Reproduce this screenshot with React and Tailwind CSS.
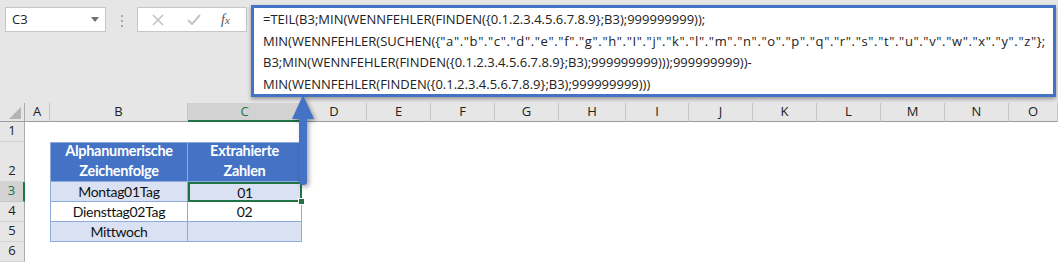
import React from 'react';

const cols = ['A', 'B', 'C', 'D', 'E', 'F', 'G', 'H', 'I', 'J', 'K', 'L', 'M', 'N', 'O'];

const letters = '"a"."b"."c"."d"."e"."f"."g"."h"."I"."j"."k"."l"."m"."n"."o"."p"."q"."r"."s"."t"."u"."v"."w"."x"."y"."z"';

const ui = { fontFamily: '"Open Sans", "Liberation Sans", sans-serif' };
const cell = { fontFamily: 'Lato, "Liberation Sans", sans-serif' };

function RowHead({ n, h, active }) {
  return (
    <div
      className={`flex items-end justify-center pb-[1px] text-[13px] border-b border-r ${h} ${
        active ? 'bg-[#d2d2d2] text-[#217346] border-r-2 border-r-[#217346] border-b-[#c6c6c6]' : 'bg-[#e6e6e6] text-[#222] border-b-[#d4d4d4] border-r-[#ababab]'
      }`}
      style={ui}
    >
      {n}
    </div>
  );
}

export default function App() {
  return (
    <div className="relative w-[1058px] h-[263px] overflow-hidden bg-white">
      {/* formula bar area */}
      <div className="h-[103px] bg-[#e6e6e6] flex items-start pt-[5px]">
        <div className="mt-[2px] ml-[5px] w-[101px] h-[25px] bg-white border border-[#c6c6c6] flex items-center justify-between pl-[6px] pr-[6px] text-[13px] text-[#222]" style={ui}>
          <span>C3</span>
          <svg width="8" height="5" viewBox="0 0 8 5"><path d="M0 0h8L4 5z" fill="#707070" /></svg>
        </div>
        <div className="mt-[10px] w-[31px] flex flex-col items-center gap-[3px]">
          <span className="w-[2px] h-[2px] bg-[#a8a8a8]" />
          <span className="w-[2px] h-[2px] bg-[#a8a8a8]" />
          <span className="w-[2px] h-[2px] bg-[#a8a8a8]" />
        </div>
        <div className="mt-[2px] w-[110px] h-[25px] bg-white border border-[#c6c6c6] flex items-center">
          <svg className="ml-[14px]" width="12" height="12" viewBox="0 0 12 12"><path d="M1 1l10 10M11 1L1 11" stroke="#c4c4c4" strokeWidth="1.6" /></svg>
          <svg className="ml-[23px]" width="14" height="12" viewBox="0 0 14 12"><path d="M1 6l4 4l8-9" stroke="#c4c4c4" strokeWidth="2" fill="none" /></svg>
          <span className="ml-[20px] text-[14px] italic text-[#555] leading-none" style={{ fontFamily: '"Liberation Serif", serif' }}>
            f<span className="text-[11px]">x</span>
          </span>
        </div>
        <div className="ml-[4px] w-[805px] h-[92px] bg-white border-[3px] border-[#4472c4] shadow-[0_2px_4px_rgba(0,0,0,0.35)] pl-[9px] pt-[1px] text-[13px] leading-[21.5px] text-[#222] whitespace-nowrap" style={ui}>
          <div>=TEIL(B3;MIN(WENNFEHLER(FINDEN({'{'}0.1.2.3.4.5.6.7.8.9{'}'};B3);999999999));</div>
          <div>
            MIN(WENNFEHLER(SUCHEN({'{'}<span className="tracking-[0.63px]">{letters}</span>{'}'};
          </div>
          <div>B3;MIN(WENNFEHLER(FINDEN({'{'}0.1.2.3.4.5.6.7.8.9{'}'};B3);999999999)));999999999))-</div>
          <div>MIN(WENNFEHLER(FINDEN({'{'}0.1.2.3.4.5.6.7.8.9{'}'};B3);999999999)))</div>
        </div>
      </div>

      {/* sheet */}
      <div className="grid grid-cols-[25px_25px_138px_114px_65px_64px_64px_64px_67px_63px_64px_64px_64px_64px_64px_1fr] grid-rows-[19px_20px_40px_20px_20px_20px_20px]">
        {/* header row */}
        <div className="bg-[#e6e6e6] border-b border-b-[#9e9e9e] border-r border-r-[#ababab] flex items-end justify-end pr-[3px] pb-[2px]">
          <svg width="12" height="12" viewBox="0 0 12 12"><path d="M12 0V12H0z" fill="#b4b4b4" /></svg>
        </div>
        {cols.map((c) => (
          <div
            key={c}
            className={`flex items-center justify-center text-[13px] border-r ${
              c === 'C' ? 'bg-[#d2d2d2] text-[#217346] border-b-2 border-b-[#217346] border-r-[#c6c6c6]' : 'bg-[#e6e6e6] text-[#222] border-b border-b-[#9e9e9e] border-r-[#c6c6c6]'
            }`}
            style={ui}
          >
            {c}
          </div>
        ))}

        {/* row 1 */}
        <RowHead n="1" h="h-[20px]" />
        <div className="col-span-15" />

        {/* row 2 */}
        <RowHead n="2" h="h-[40px]" />
        <div />
        <div className="bg-[#4472c4] border border-[#8ea9db] flex items-end justify-center pb-0 text-white font-bold text-[14.5px] tracking-[-0.3px] leading-[20px] text-center" style={cell}>
          Alphanumerische<br />Zeichenfolge
        </div>
        <div className="bg-[#4472c4] border border-l-0 border-[#8ea9db] flex items-end justify-center pb-0 text-white font-bold text-[14.5px] tracking-[-0.3px] leading-[20px] text-center" style={cell}>
          Extrahierte<br />Zahlen
        </div>
        <div className="col-span-12" />

        {/* row 3 */}
        <RowHead n="3" h="h-[20px]" active />
        <div />
        <div className="bg-[#d9e1f2] border border-t-0 border-[#8ea9db] flex items-center justify-center text-[14px] tracking-[-0.3px] text-[#111]" style={cell}>Montag01Tag</div>
        <div className="relative bg-[#d9e1f2] border-2 border-[#217346] flex items-center justify-center text-[14px] tracking-[-0.3px] text-[#111]" style={cell}>
          01
          <span className="absolute -right-[5px] -bottom-[5px] w-[7px] h-[7px] bg-[#217346] border border-white" />
        </div>
        <div className="col-span-12" />

        {/* row 4 */}
        <RowHead n="4" h="h-[20px]" />
        <div />
        <div className="bg-white border border-t-0 border-[#8ea9db] flex items-center justify-center text-[14px] tracking-[-0.3px] text-[#111]" style={cell}>Diensttag02Tag</div>
        <div className="bg-white border border-t-0 border-l-0 border-[#8ea9db] flex items-center justify-center text-[14px] tracking-[-0.3px] text-[#111]" style={cell}>02</div>
        <div className="col-span-12" />

        {/* row 5 */}
        <RowHead n="5" h="h-[20px]" />
        <div />
        <div className="bg-[#d9e1f2] border border-t-0 border-[#8ea9db] flex items-center justify-center text-[14px] tracking-[-0.3px] text-[#111]" style={cell}>Mittwoch</div>
        <div className="bg-[#d9e1f2] border border-t-0 border-l-0 border-[#8ea9db]" />
        <div className="col-span-12" />

        {/* row 6 */}
        <RowHead n="6" h="h-[20px]" />
        <div className="col-span-15" />
      </div>

      {/* arrow from cell to formula */}
      <svg className="absolute left-[288px] top-[92px] drop-shadow-[2px_2px_2px_rgba(0,0,0,0.35)]" width="30" height="96" viewBox="0 0 30 96">
        <path d="M15 3L26 27H19V90Q19 93 15 93Q11 93 11 90V27H4z" fill="#4472c4" />
      </svg>
    </div>
  );
}
